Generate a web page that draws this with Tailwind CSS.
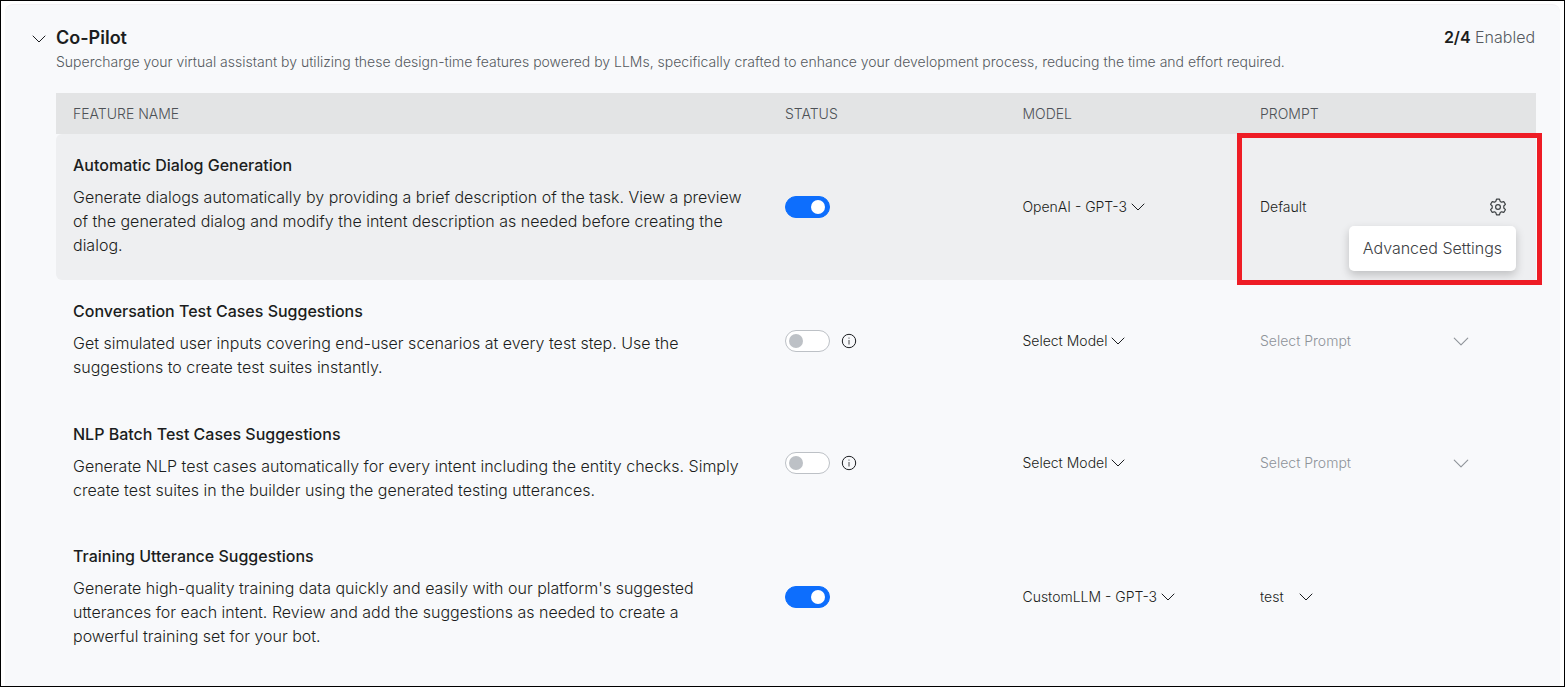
<!DOCTYPE html>
<html lang="en">
<head>
<meta charset="utf-8">
<meta name="viewport" content="width=device-width, initial-scale=1">
<title>Co-Pilot</title>
<script src="https://cdn.jsdelivr.net/npm/@tailwindcss/browser@4"></script>
</head>
<body class="min-h-screen flex border border-black bg-white font-['Inter',sans-serif] font-light text-[#1b1d20]">
<svg class="hidden" aria-hidden="true">
  <symbol id="chevron" viewBox="0 0 14 8"><path d="M1 1l6 6 6-6" fill="none" stroke="currentColor" stroke-linecap="round" stroke-linejoin="round"/></symbol>
  <symbol id="info" viewBox="0 0 16 16"><circle cx="8" cy="8" r="6.7" fill="none" stroke="currentColor"/><path d="M8 7v4.500" stroke="currentColor" stroke-width=".8"/><circle cx="8" cy="5" r=".6" fill="currentColor"/></symbol>
</svg>
<main class="grow mt-[3px] mx-1 rounded-t-lg border-t border-[#f3f1f4] bg-[#f8f9fb] pl-7 pr-6 pt-[21px]">
  <header class="flex justify-between">
    <div class="flex">
      <button type="button" aria-label="Collapse Co-Pilot" class="w-[23px] h-6 flex items-center"><svg class="w-3.5 h-2 mt-0.5 -ml-px"><use href="#chevron"/></svg></button>
      <div>
        <h1 class="text-lg leading-6 font-semibold">Co-Pilot</h1>
        <p class="text-sm leading-6 text-[#55595e]">Supercharge your virtual assistant by utilizing these design-time features powered by LLMs, specifically crafted to enhance your development process, reducing the time and effort required.</p>
      </div>
    </div>
    <p class="pr-px text-base leading-[22px] text-[#55595e] whitespace-nowrap"><span class="font-semibold text-[#1b1d20]">2/4</span> Enabled</p>
  </header>
  <div class="pl-[23px] mt-[19px]">
  <table class="w-full table-fixed text-left text-sm">
    <colgroup><col class="w-[48.1%]"><col class="w-[16.05%]"><col class="w-[16.05%]"><col></colgroup>
    <thead class="bg-[#e3e4e5] text-[#4d5156]">
      <tr class="h-[41px]">
        <th class="px-[17px] font-light">FEATURE NAME</th>
        <th class="px-[17px] font-light">STATUS</th>
        <th class="px-[17px] font-light">MODEL</th>
        <th class="px-[17px] font-light">PROMPT</th>
      </tr>
    </thead>
    <tbody>
      <tr class="bg-[#eeeff1]">
        <td class="px-[17px] pt-[19px] pb-[23px] rounded-l-md">
          <h2 class="text-base leading-6 font-medium">Automatic Dialog Generation</h2>
          <p class="mt-2 pr-1 text-base leading-6">Generate dialogs automatically by providing a brief description of the task. View a preview of the generated dialog and modify the intent description as needed before creating the dialog.</p>
        </td>
        <td class="px-[17px]">
          <input type="checkbox" checked aria-label="Automatic Dialog Generation" class="block appearance-none w-[45px] h-[22px] rounded-full bg-white border border-[#bdc1c6] checked:bg-[#0d6efd] checked:border-[#0d6efd] before:block before:size-3.5 before:mt-[3px] before:ml-[3px] before:rounded-full before:bg-[#bdc1c6] checked:before:ml-[25px] checked:before:bg-white">
        </td>
        <td class="px-[17px]">
          <label class="flex items-center gap-1"><select aria-label="Model" class="appearance-none field-sizing-content bg-transparent"><option>OpenAI - GPT-3</option></select><svg class="w-3.5 h-2"><use href="#chevron"/></svg></label>
        </td>
        <td class="relative px-[17px]">
          <div class="flex items-center justify-between pr-3">
            <span>Default</span>
            <button type="button" aria-label="Prompt settings" class="block"><svg class="size-[18px]" viewBox="0 0 18 18" fill="none" stroke="#3c4043" stroke-width="1.2" stroke-linejoin="round"><path d="M7.500 1.200h3l.7 2.200 1.400.8 2.300-.5 1.500 2.600-1.600 1.700v2l1.600 1.700-1.500 2.600-2.300-.5-1.400.8-.7 2.200h-3l-.7-2.200-1.400-.8-2.300.5-1.500-2.600L3.200 10V8L1.600 6.300l1.500-2.600 2.300.5 1.400-.8z"/><circle cx="9" cy="9" r="2.400"/></svg></button>
          </div>
          <button type="button" class="absolute right-5 bottom-[9px] h-[45px] pb-0.5 px-3.5 rounded-[5px] bg-white text-base text-[#3c4043] whitespace-nowrap shadow-[0_4px_10px_rgba(0,0,0,0.2)]">Advanced Settings</button>
          <div class="absolute -top-px -bottom-[5px] -left-1.5 -right-1.5 border-5 border-[#ee1c25] pointer-events-none"></div>
        </td>
      </tr>
      <tr>
        <td class="px-[17px] pt-[19px] pb-[23px]">
          <h2 class="text-base leading-6 font-medium">Conversation Test Cases Suggestions</h2>
          <p class="mt-2 pr-1 text-base leading-6">Get simulated user inputs covering end-user scenarios at every test step. Use the suggestions to create test suites instantly.</p>
        </td>
        <td class="px-[17px]">
          <div class="flex items-center gap-[11px]">
            <input type="checkbox" aria-label="Conversation Test Cases Suggestions" class="block appearance-none w-[45px] h-[22px] rounded-full bg-white border border-[#bdc1c6] checked:bg-[#0d6efd] checked:border-[#0d6efd] before:block before:size-3.5 before:mt-[3px] before:ml-[3px] before:rounded-full before:bg-[#bdc1c6] checked:before:ml-[25px] checked:before:bg-white">
            <button type="button" aria-label="More information"><svg class="block size-4"><use href="#info"/></svg></button>
          </div>
        </td>
        <td class="px-[17px]">
          <label class="flex items-center gap-1"><select aria-label="Model" class="appearance-none field-sizing-content bg-transparent"><option>Select Model</option></select><svg class="w-3.5 h-2"><use href="#chevron"/></svg></label>
        </td>
        <td class="px-[17px]">
          <label class="flex items-center justify-between pr-[50px] text-[#8e9399]"><select aria-label="Prompt" class="appearance-none field-sizing-content bg-transparent"><option>Select Prompt</option></select><svg class="w-4 h-[9px]"><use href="#chevron"/></svg></label>
        </td>
      </tr>
      <tr>
        <td class="px-[17px] pt-5 pb-[22px]">
          <h2 class="text-base leading-6 font-medium">NLP Batch Test Cases Suggestions</h2>
          <p class="mt-2 pr-1 text-base leading-6">Generate NLP test cases automatically for every intent including the entity checks. Simply create test suites in the builder using the generated testing utterances.</p>
        </td>
        <td class="px-[17px]">
          <div class="flex items-center gap-[11px]">
            <input type="checkbox" aria-label="NLP Batch Test Cases Suggestions" class="block appearance-none w-[45px] h-[22px] rounded-full bg-white border border-[#bdc1c6] checked:bg-[#0d6efd] checked:border-[#0d6efd] before:block before:size-3.5 before:mt-[3px] before:ml-[3px] before:rounded-full before:bg-[#bdc1c6] checked:before:ml-[25px] checked:before:bg-white">
            <button type="button" aria-label="More information"><svg class="block size-4"><use href="#info"/></svg></button>
          </div>
        </td>
        <td class="px-[17px]">
          <label class="flex items-center gap-1"><select aria-label="Model" class="appearance-none field-sizing-content bg-transparent"><option>Select Model</option></select><svg class="w-3.5 h-2"><use href="#chevron"/></svg></label>
        </td>
        <td class="px-[17px]">
          <label class="flex items-center justify-between pr-[50px] text-[#8e9399]"><select aria-label="Prompt" class="appearance-none field-sizing-content bg-transparent"><option>Select Prompt</option></select><svg class="w-4 h-[9px]"><use href="#chevron"/></svg></label>
        </td>
      </tr>
      <tr>
        <td class="px-[17px] pt-5 pb-[22px]">
          <h2 class="text-base leading-6 font-medium">Training Utterance Suggestions</h2>
          <p class="mt-2 pr-1 text-base leading-6">Generate high-quality training data quickly and easily with our platform's suggested utterances for each intent. Review and add the suggestions as needed to create a powerful training set for your bot.</p>
        </td>
        <td class="px-[17px]">
          <input type="checkbox" checked aria-label="Training Utterance Suggestions" class="block appearance-none w-[45px] h-[22px] rounded-full bg-white border border-[#bdc1c6] checked:bg-[#0d6efd] checked:border-[#0d6efd] before:block before:size-3.5 before:mt-[3px] before:ml-[3px] before:rounded-full before:bg-[#bdc1c6] checked:before:ml-[25px] checked:before:bg-white">
        </td>
        <td class="px-[17px]">
          <label class="flex items-center gap-1"><select aria-label="Model" class="appearance-none field-sizing-content bg-transparent"><option>CustomLLM - GPT-3</option></select><svg class="w-3.5 h-2"><use href="#chevron"/></svg></label>
        </td>
        <td class="px-[17px]">
          <label class="flex items-center gap-[15px]"><select aria-label="Prompt" class="appearance-none field-sizing-content bg-transparent"><option>test</option></select><svg class="w-3.5 h-2"><use href="#chevron"/></svg></label>
        </td>
      </tr>
    </tbody>
  </table>
  </div>
</main>
</body>
</html>
